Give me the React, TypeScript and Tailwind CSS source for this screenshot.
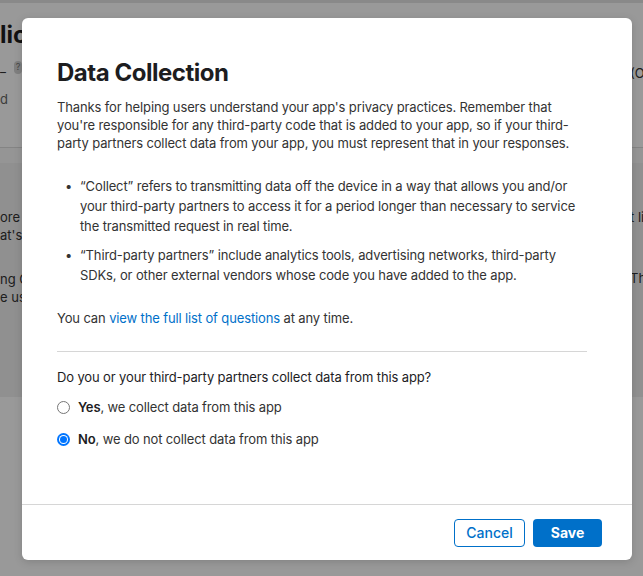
import React from "react";

const bullets = [
  [
    "“Collect” refers to transmitting data off the device in a way that allows you and/or",
    "your third-party partners to access it for a period longer than necessary to service",
    "the transmitted request in real time.",
  ],
  [
    "“Third-party partners” include analytics tools, advertising networks, third-party",
    "SDKs, or other external vendors whose code you have added to the app.",
  ],
];

const Radio: React.FC<{ checked?: boolean }> = ({ checked }) =>
  checked ? (
    <span className="flex h-[13px] w-[13px] shrink-0 items-center justify-center rounded-full bg-[#0075ff]">
      <span className="flex h-[9px] w-[9px] items-center justify-center rounded-full bg-white">
        <span className="h-[7px] w-[7px] rounded-full bg-[#0075ff]" />
      </span>
    </span>
  ) : (
    <span className="h-[13px] w-[13px] shrink-0 rounded-full border border-[#767676] bg-white" />
  );

export default function App() {
  return (
    <div className="relative flex h-[576px] w-[643px] flex-col overflow-hidden bg-white font-['Inter','Roboto',sans-serif] text-[#333]">
      {/* page behind the dialog */}
      <div className="h-[3px] bg-[#e4e4e4]" />
      <div className="flex h-[144px] justify-between">
        <div className="flex w-[22px] flex-col">
          <span className="mt-[18px] text-[24px] font-bold leading-[28px] text-[#1d1d1f]">lic</span>
          <div className="mt-[9px] flex items-center gap-[8px] text-[13px]">
            <span className="leading-[18px]">_</span>
            <span className="flex h-[13px] w-[13px] items-center justify-center rounded-full bg-[#d4d4d4] text-[9px] text-[#777]">?</span>
          </div>
          <span className="mt-[14px] text-[13px] leading-[18px] text-[#666]">d</span>
        </div>
        <div className="w-[13px]">
          <span className="mt-[61px] block whitespace-nowrap text-[13px] leading-[18px]">(O</span>
        </div>
      </div>
      <div className="h-px bg-[#dcdcdc]" />
      <div className="h-[15px] bg-[#f8f8f8]" />
      <div className="flex h-[234px] justify-between bg-[#f0f0f0] text-[13px] leading-[18px]">
        <div className="w-[22px] whitespace-nowrap">
          <div className="mt-[45px]">ore</div>
          <div>at's</div>
          <div className="mt-[26px]">ng G</div>
          <div>e us</div>
        </div>
        <div className="w-[13px] whitespace-nowrap">
          <div className="mt-[45px]">t lik</div>
          <div className="mt-[43px]">This</div>
        </div>
      </div>
      <div className="flex-1 bg-white" />

      <div className="absolute inset-0 bg-black/40" />

      {/* dialog */}
      <div className="absolute left-[22px] top-[18px] flex h-[542px] w-[610px] flex-col rounded-[6px] bg-white shadow-[0_2px_8px_rgba(0,0,0,0.15)]">
        <div className="flex-1 pl-[35px] pr-[45px] pt-[40px]">
          <h1 className="text-[24px] font-bold leading-[30px] tracking-[-0.02em] text-[#1d1d1f]">Data Collection</h1>
          <p className="mt-[10px] whitespace-nowrap text-[13px] leading-[18px] tracking-[-0.01em]">
            Thanks for helping users understand your app's privacy practices. Remember that
            <br />
            you're responsible for any third-party code that is added to your app, so if your third-
            <br />
            party partners collect data from your app, you must represent that in your responses.
          </p>
          <ul className="mt-[24px] flex flex-col gap-[9px] text-[13px] leading-[20px] tracking-[-0.01em]">
            {bullets.map((lines, i) => (
              <li key={i} className="flex">
                <span className="w-[23px] shrink-0 pl-[8px]">•</span>
                <span className="whitespace-nowrap">
                  {lines.map((l, j) => (
                    <span key={j} className="block">
                      {l}
                    </span>
                  ))}
                </span>
              </li>
            ))}
          </ul>
          <p className="mt-[24px] text-[13px] leading-[18px] tracking-[-0.01em]">
            You can <a href="#questions" className="text-[#0070c9]">view the full list of questions</a> at any time.
          </p>
          <div className="mt-[24px] h-px bg-[#d6d6d6]" />
          <p className="mt-[16px] text-[13px] leading-[18px] tracking-[-0.01em] text-[#1d1d1f]">
            Do you or your third-party partners collect data from this app?
          </p>
          <div className="mt-[12px] flex flex-col gap-[14px] text-[13px] leading-[18px] tracking-[-0.01em]">
            <label className="flex items-center gap-[8px]">
              <Radio />
              <span>
                <b className="font-semibold text-[#1d1d1f]">Yes</b>, we collect data from this app
              </span>
            </label>
            <label className="flex items-center gap-[8px]">
              <Radio checked />
              <span>
                <b className="font-semibold text-[#1d1d1f]">No</b>, we do not collect data from this app
              </span>
            </label>
          </div>
        </div>
        <div className="flex h-[56px] items-center justify-end gap-[8px] border-t border-[#d6d6d6] pr-[30px]">
          <button className="h-[28px] w-[71px] rounded-[4px] border border-[#0070c9] bg-white text-[14px] font-medium text-[#0070c9]">
            Cancel
          </button>
          <button className="h-[28px] w-[69px] rounded-[4px] bg-[#0070c9] text-[14px] font-bold text-white">
            Save
          </button>
        </div>
      </div>
    </div>
  );
}
